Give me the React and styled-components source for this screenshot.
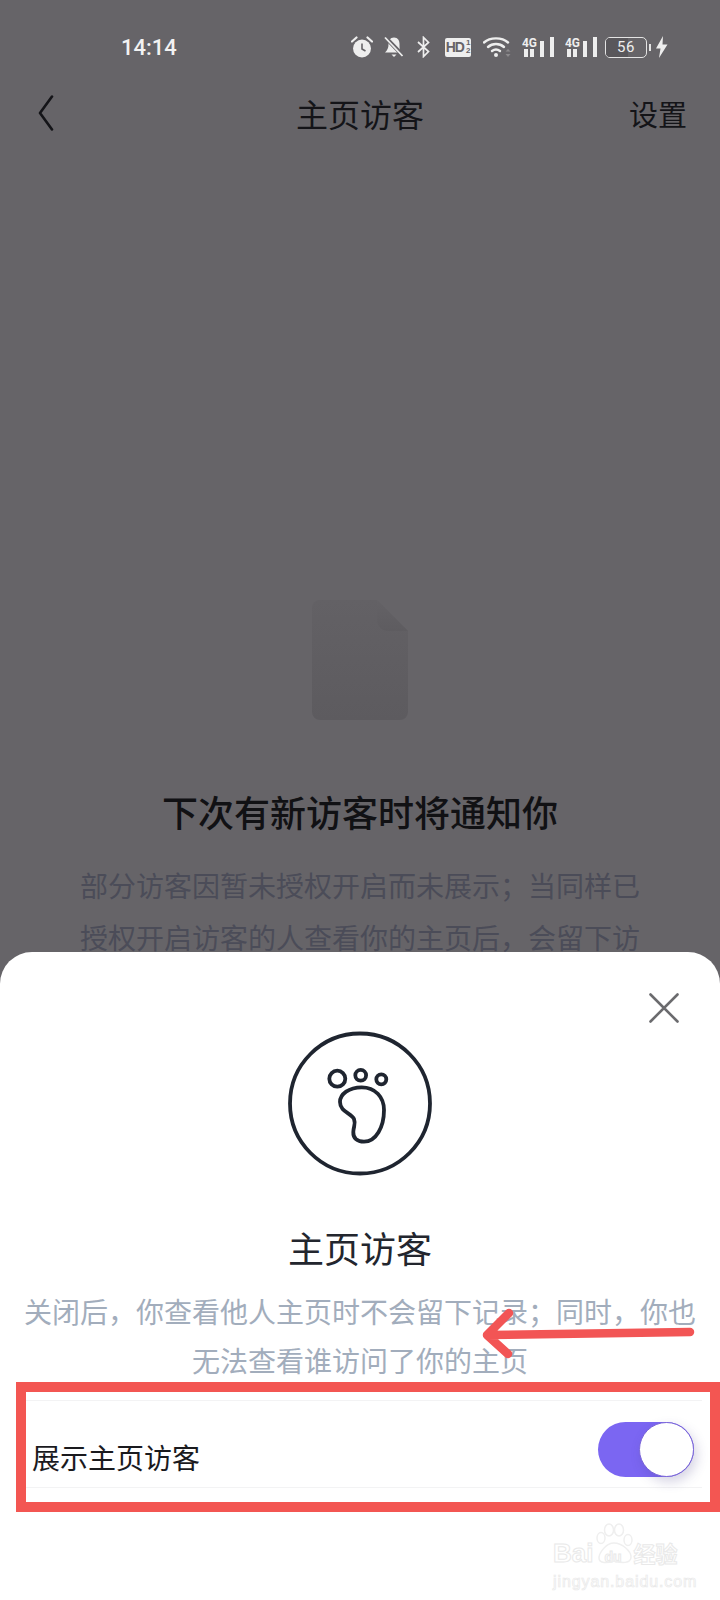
import React from 'react';
import styled, { createGlobalStyle } from 'styled-components';

const GlobalStyle = createGlobalStyle`
    html, body {
        margin: 0;
        padding: 0;
        background: #666468;
    }
    * {
        box-sizing: border-box;
    }
`;

const CJK = `"Noto Sans CJK SC", "Noto Sans", sans-serif`;

const App = () => {
    return (
        <Page>
            <GlobalStyle />
            <StatusBar>
                <Time>14:14</Time>
                <StatusIcons>
                    <Slot $ml={0}><AlarmIcon /></Slot>
                    <Slot $ml={11}><MuteIcon /></Slot>
                    <Slot $ml={13}><BluetoothIcon /></Slot>
                    <Slot $ml={15}>
                        <HdBadge>HD<HdFraction><span>1</span><span>2</span></HdFraction></HdBadge>
                    </Slot>
                    <Slot $ml={12}><WifiIcon /></Slot>
                    <Slot $ml={11}><SignalIcon /></Slot>
                    <Slot $ml={11}><SignalIcon /></Slot>
                    <Slot $ml={8}>
                        <Battery><BatteryFill /><BatteryText>56</BatteryText></Battery>
                        <BatteryNub />
                    </Slot>
                    <Slot $ml={4}><BoltIcon /></Slot>
                </StatusIcons>
            </StatusBar>

            <Nav>
                <BackButton>
                    <svg width="16" height="36" viewBox="0 0 16 36" fill="none">
                        <path d="M14 1.5 L2 18 L14 34.5" stroke="#141418" strokeWidth="2.6" strokeLinecap="round" strokeLinejoin="round" />
                    </svg>
                </BackButton>
                <NavTitle>主页访客</NavTitle>
                <NavAction>设置</NavAction>
            </Nav>

            <EmptyState>
                <svg width="96" height="120" viewBox="0 0 96 120">
                    <defs>
                        <linearGradient id="docFill" x1="0" y1="0" x2="0" y2="1">
                            <stop offset="0" stopColor="#636165" />
                            <stop offset="1" stopColor="#5d5b5f" />
                        </linearGradient>
                        <linearGradient id="foldFill" x1="0" y1="0" x2="0" y2="1">
                            <stop offset="0" stopColor="#646266" />
                            <stop offset="1" stopColor="#5e5c60" />
                        </linearGradient>
                    </defs>
                    <path d="M8 0 H65 L96 31 V112 a8 8 0 0 1 -8 8 H8 a8 8 0 0 1 -8 -8 V8 a8 8 0 0 1 8 -8 Z" fill="url(#docFill)" />
                    <path d="M65 0 L96 31 H76 a11 11 0 0 1 -11 -11 Z" fill="url(#foldFill)" />
                </svg>
                <EmptyTitle>下次有新访客时将通知你</EmptyTitle>
                <EmptyText>部分访客因暂未授权开启而未展示；当同样已授权开启访客的人查看你的主页后，会留下访</EmptyText>
            </EmptyState>

            <Sheet>
                <CloseRow>
                    <svg width="30" height="30" viewBox="0 0 30 30" fill="none">
                        <path d="M1.5 1.5 L28.5 28.5 M28.5 1.5 L1.5 28.5" stroke="#6b6b6e" strokeWidth="2.6" strokeLinecap="round" />
                    </svg>
                </CloseRow>
                <FootBadge>
                    <svg width="146" height="146" viewBox="-1 -1 146 146" fill="none" stroke="#1f2530" strokeWidth="3.8">
                        <circle cx="72" cy="71.5" r="70" />
                        <circle cx="49.3" cy="46.7" r="8" />
                        <circle cx="72.7" cy="43.3" r="5.4" />
                        <circle cx="93.3" cy="47.3" r="5" />
                        <path d="M73.7 55.3 C87 55.3 96 65 96 78 C96 95 88 109.7 76 109.7 C69 109.7 65 106 65.3 100 C65.5 94 68 92 66 87 C63.5 81 52 80 52 70 C52 62 61 55.3 73.7 55.3 Z" />
                    </svg>
                </FootBadge>
                <SheetTitle>主页访客</SheetTitle>
                <SheetText>关闭后，你查看他人主页时不会留下记录；同时，你也<br />无法查看谁访问了你的主页</SheetText>
                <SettingRow>
                    <SettingLabel>展示主页访客</SettingLabel>
                    <Toggle><Knob /></Toggle>
                </SettingRow>

                <ArrowMark width="224" height="60" viewBox="0 0 224 60" fill="none">
                    <path d="M209 25 L6 28 M28 6 L6 28 L27 47" stroke="#f25555" strokeWidth="8.5" strokeLinecap="round" strokeLinejoin="round" />
                </ArrowMark>
                <RedBox />

                <Watermark>
                    <PawMark width="40" height="42" viewBox="0 0 40 42" fill="none" stroke="#efefef" strokeWidth="1.5">
                        <ellipse cx="13" cy="7" rx="4.5" ry="6" />
                        <ellipse cx="23" cy="7" rx="4.5" ry="6" />
                        <ellipse cx="5" cy="15" rx="4" ry="5.5" />
                        <ellipse cx="32" cy="17" rx="4" ry="5.5" />
                        <path d="M18 20 C10 20 3 30 3 35 C3 41 12 40 18 38 C25 40 35 41 35 34 C35 28 26 20 18 20 Z" />
                    </PawMark>
                    <WatermarkLogo>
                        <WatermarkBai>Bai</WatermarkBai>
                        <WatermarkDu>du</WatermarkDu>
                        <WatermarkCn>经验</WatermarkCn>
                    </WatermarkLogo>
                    <WatermarkUrl>jingyan.baidu.com</WatermarkUrl>
                </Watermark>
            </Sheet>
        </Page>
    );
};

export default App;

// status bar drawings
const AlarmIcon = () => (
    <svg width="22" height="22" viewBox="0 0 22 22" style={{ display: 'block' }}>
        <circle cx="11" cy="12.5" r="9" fill="#eeeeee" />
        <path d="M1 5.5 L5.5 1.5 M21 5.5 L16.5 1.5" stroke="#eeeeee" strokeWidth="2.2" strokeLinecap="round" />
        <path d="M11 7.5 V13 L14.5 15" stroke="#666468" strokeWidth="1.6" fill="none" />
    </svg>
);

const MuteIcon = () => (
    <svg width="20" height="22" viewBox="0 0 20 22" style={{ display: 'block' }}>
        <path d="M10 1.5 C6 1.5 4.5 5 4.5 8 C4.5 12 3.5 14 1 16.5 H16.5 C15.5 14 15.5 11 15.5 8 C15.5 4.5 14 1.5 10 1.5 Z" fill="#eeeeee" />
        <path d="M7.5 18.5 H12.5 L10 21 Z" fill="#eeeeee" />
        <path d="M1.5 1.5 L18.5 19" stroke="#666468" strokeWidth="4" />
        <path d="M1 1.5 L18.5 20" stroke="#eeeeee" strokeWidth="1.8" />
    </svg>
);

const BluetoothIcon = () => (
    <svg width="13" height="22" viewBox="0 0 13 22" fill="none" style={{ display: 'block' }}>
        <path d="M1 6 L11.5 15.5 L6.5 20.5 V1.5 L11.5 6.5 L1 16" stroke="#eeeeee" strokeWidth="1.7" />
    </svg>
);

const WifiIcon = () => (
    <svg width="28" height="22" viewBox="0 0 28 22" fill="none" style={{ display: 'block' }}>
        <path d="M1 6.5 C7 1 19 1 25 6.5" stroke="#eeeeee" strokeWidth="2.4" strokeLinecap="round" />
        <path d="M5 11 C9.5 7 16.5 7 21 11" stroke="#eeeeee" strokeWidth="2.4" strokeLinecap="round" />
        <path d="M9 15 C11.5 13 14.5 13 17 15" stroke="#eeeeee" strokeWidth="2.4" strokeLinecap="round" />
        <circle cx="13" cy="19" r="2" fill="#eeeeee" />
        <path d="M25 13 L27.5 15.5 H22.5 Z M25 21 L27.5 18 H22.5 Z" fill="#8b898c" />
    </svg>
);

const SignalIcon = () => (
    <svg width="32" height="22" viewBox="0 0 32 22" style={{ display: 'block' }}>
        <text x="0" y="10.5" fontFamily="Roboto, sans-serif" fontSize="13" fontWeight="700" fill="#eeeeee" textLength="15" lengthAdjust="spacingAndGlyphs">4G</text>
        <rect x="2" y="13" width="4" height="8" fill="#eeeeee" />
        <rect x="8" y="13" width="4" height="8" fill="#eeeeee" />
        <rect x="18" y="5" width="4" height="16" fill="#eeeeee" />
        <rect x="28" y="1" width="4" height="20" fill="#eeeeee" />
    </svg>
);

const BoltIcon = () => (
    <svg width="13" height="22" viewBox="0 0 13 22" style={{ display: 'block' }}>
        <path d="M8 0 L1 12.5 H5.5 L4 22 L12.5 8.5 H7.5 Z" fill="#eeeeee" />
    </svg>
);

// Styled-components
const Page = styled.div`
    position: relative;
    width: 720px;
    height: 1600px;
    overflow: hidden;
    background: #666468;
    font-family: ${CJK};
`;

const StatusBar = styled.div`
    display: flex;
    align-items: center;
    height: 94px;
    padding: 0 52px 0 121px;
`;

const Time = styled.div`
    font-family: Roboto, sans-serif;
    font-size: 22px;
    font-weight: 500;
    color: #f2f2f2;
`;

const StatusIcons = styled.div`
    display: flex;
    align-items: center;
    margin-left: auto;
`;

const Slot = styled.div`
    display: flex;
    align-items: center;
    margin-left: ${props => props.$ml}px;
`;

const HdBadge = styled.div`
    display: flex;
    align-items: center;
    justify-content: center;
    width: 26px;
    height: 19px;
    background: #eeeeee;
    border-radius: 2px;
    color: #666468;
    font-family: "Liberation Sans", sans-serif;
    font-size: 14px;
    font-weight: 700;
    letter-spacing: -1px;
`;

const HdFraction = styled.span`
    display: flex;
    flex-direction: column;
    margin-left: 2px;
    font-size: 8px;
    line-height: 8px;
    letter-spacing: 0;
`;

const Battery = styled.div`
    position: relative;
    display: flex;
    align-items: center;
    justify-content: center;
    width: 42px;
    height: 21px;
    border: 1.5px solid #e4e4e4;
    border-radius: 5px;
    overflow: hidden;
`;

const BatteryFill = styled.div`
    position: absolute;
    top: 0;
    bottom: 0;
    left: 0;
    width: 56%;
    background: #59575b;
`;

const BatteryText = styled.span`
    position: relative;
    font-family: Roboto, sans-serif;
    font-size: 15px;
    line-height: 1;
    letter-spacing: 0.5px;
    color: #eeeeee;
`;

const BatteryNub = styled.div`
    width: 2px;
    height: 7px;
    margin-left: 2px;
    background: #e4e4e4;
`;

const Nav = styled.div`
    display: grid;
    grid-template-columns: 1fr auto 1fr;
    align-items: center;
    height: 38px;
    padding: 0 33px;
`;

const BackButton = styled.div`
    display: flex;
    margin-left: 5px;
`;

const NavTitle = styled.div`
    font-size: 32px;
    line-height: 38px;
    color: #141418;
`;

const NavAction = styled.div`
    justify-self: end;
    font-size: 29px;
    line-height: 38px;
    color: #141418;
`;

const EmptyState = styled.div`
    display: flex;
    flex-direction: column;
    align-items: center;
    margin-top: 468px;
`;

const EmptyTitle = styled.div`
    margin-top: 66px;
    font-size: 36px;
    font-weight: 500;
    line-height: 50px;
    color: #111114;
`;

const EmptyText = styled.div`
    width: 564px;
    margin-top: 23px;
    font-size: 28px;
    line-height: 52px;
    text-align: center;
    color: #4b4c58;
`;

const Sheet = styled.div`
    position: absolute;
    left: 0;
    right: 0;
    bottom: 0;
    display: flex;
    flex-direction: column;
    height: 648px;
    padding-top: 41px;
    background: #ffffff;
    border-radius: 32px 32px 0 0;
`;

const CloseRow = styled.div`
    display: flex;
    justify-content: flex-end;
    height: 30px;
    padding-right: 41px;
`;

const FootBadge = styled.div`
    display: flex;
    justify-content: center;
    height: 146px;
    margin-top: 8px;
`;

const SheetTitle = styled.div`
    margin-top: 47px;
    font-size: 36px;
    line-height: 46px;
    text-align: center;
    color: #23262e;
`;

const SheetText = styled.div`
    margin-top: 17px;
    font-size: 28px;
    line-height: 49px;
    text-align: center;
    color: #a2adbc;
`;

const SettingRow = styled.div`
    display: flex;
    justify-content: space-between;
    height: 88px;
    margin: 15px 18px 0;
    padding: 0 8px 0 14px;
    border-top: 1px solid #f3f3f4;
    border-bottom: 1px solid #f3f3f4;
`;

const SettingLabel = styled.div`
    padding-top: 36px;
    font-size: 28px;
    line-height: 40px;
    color: #1a1a1e;
`;

const Toggle = styled.div`
    display: flex;
    justify-content: flex-end;
    width: 96px;
    height: 55px;
    margin-top: 21px;
    background: #7b66f2;
    border-radius: 28px;
`;

const Knob = styled.div`
    width: 55px;
    height: 55px;
    background: #ffffff;
    border: 1px solid #7a65d8;
    border-radius: 50%;
    box-shadow: 3px 5px 12px rgba(70, 60, 130, 0.22);
`;

const ArrowMark = styled.svg`
    position: absolute;
    top: 355px;
    left: 481px;
`;

const RedBox = styled.div`
    position: absolute;
    top: 430px;
    left: 16px;
    right: 0;
    height: 130px;
    border: 10px solid #f35652;
    pointer-events: none;
`;

const Watermark = styled.div`
    position: absolute;
    top: 571px;
    left: 553px;
    width: 130px;
`;

const PawMark = styled.svg`
    position: absolute;
    top: 0;
    left: 43px;
`;

const WatermarkLogo = styled.div`
    display: flex;
    align-items: baseline;
    margin-top: 17px;
    font-family: "Liberation Sans", ${CJK};
    font-weight: 700;
    line-height: 26px;
    color: #ffffff;
    -webkit-text-stroke: 1px #e9e9e9;
`;

const WatermarkBai = styled.span`
    font-size: 26px;
`;

const WatermarkDu = styled.span`
    margin-left: 11px;
    font-size: 14px;
`;

const WatermarkCn = styled.span`
    margin-left: 12px;
    font-size: 22px;
`;

const WatermarkUrl = styled.div`
    margin-top: 3px;
    font-family: "Liberation Sans", sans-serif;
    font-size: 16px;
    line-height: 18px;
    letter-spacing: 0.9px;
    white-space: nowrap;
    color: #ffffff;
    -webkit-text-stroke: 0.7px #e9e9e9;
`;
